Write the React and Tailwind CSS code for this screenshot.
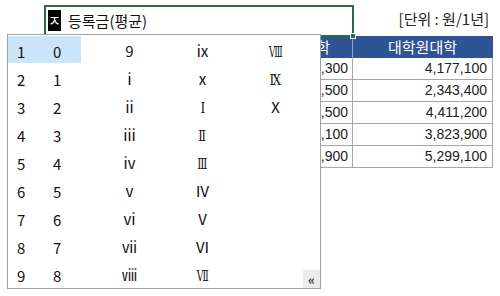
const FONT = { fontFamily: '"Noto Sans CJK KR", "Noto Sans", sans-serif' };
const NUM = { fontFamily: '"Liberation Sans", Arial, sans-serif' };
const BAR = { fontFamily: '"DejaVu Serif", "Noto Sans CJK KR", serif' };

const cols = [
  ["9", "ⅰ", "ⅱ", "ⅲ", "ⅳ", "ⅴ", "ⅵ", "ⅶ", "ⅷ"],
  ["ⅸ", "ⅹ", "Ⅰ", "Ⅱ", "Ⅲ", "Ⅳ", "Ⅴ", "Ⅵ", "Ⅶ"],
  ["Ⅷ", "Ⅸ", "Ⅹ", "", "", "", "", "", ""],
];

// glyphs drawn with top/bottom bars in the reference
const barred = { "Ⅰ": "scale-x-[0.8]", "Ⅱ": "scale-x-[0.75]", "Ⅲ": "scale-x-[0.7]", "Ⅶ": "scale-x-[0.62]", "Ⅷ": "scale-x-[0.58]", "Ⅸ": "scale-x-[0.8]" };

const rows = [
  ["1,802,300", "4,177,100"],
  ["1,554,500", "2,343,400"],
  ["2,071,500", "4,411,200"],
  ["1,938,100", "3,823,900"],
  ["2,496,900", "5,299,100"],
];

function Cell({ v }) {
  if (barred[v]) {
    return (
      <span className={`inline-block ${barred[v]}`} style={BAR}>
        {v}
      </span>
    );
  }
  return <span>{v}</span>;
}

function HanjaPopup() {
  return (
    <div className="absolute left-[7px] top-[34px] w-[314px] h-[255px] border border-[#a0a0a0] bg-white z-20 text-[15px] text-[#111]">
      <div className="flex flex-col">
        {Array.from({ length: 9 }).map((_, i) => (
          <div key={i} className="flex h-[28px] items-center">
            <div className={`flex w-[73px] h-[27px] items-center pt-[6px] ${i === 0 ? "bg-[#cce4f7]" : ""}`}>
              <span className="w-[45px] pl-[9px]">{i + 1}</span>
              <span>{i}</span>
            </div>
            <div className="w-[12px]" />
            {cols.map((c, j) => (
              <div key={j} className="w-[73px] pt-[5px] text-center">
                <Cell v={c[i]} />
              </div>
            ))}
          </div>
        ))}
      </div>
      <div className="absolute right-0 bottom-0 w-[17px] h-[18px] bg-[#ececec] flex items-center justify-center text-[13px] font-bold leading-none text-[#333]">
        «
      </div>
    </div>
  );
}

export default function App() {
  return (
    <div className="relative w-[500px] h-[296px] bg-white overflow-hidden" style={FONT}>
      <div className="flex h-[36px] pl-[44px] pr-[11px]">
        <div className="relative z-10 mt-[5px] w-[310px] h-[32px] border-2 border-[#2b6b45] flex items-start">
          <span className="mt-[3px] ml-[2px] w-[13px] h-[21px] bg-black text-white text-[14px] leading-[21px] text-center">ㅈ</span>
          <span className="mt-[3px] ml-[7px] text-[15px] leading-[21px] text-[#111]">등록금(평균)</span>
          <span className="absolute -right-[4px] -bottom-[4px] w-[6px] h-[6px] bg-[#2b6b45] border border-white" />
        </div>
        <div className="ml-auto mt-[8px] text-[15px] leading-[22px] text-[#222]">[단위 : 원/1년]</div>
      </div>
      <div className="ml-[253px] w-[240px] text-[14px] text-[#222]">
        <div className="grid grid-cols-[100px_139px] h-[22px] bg-[#2f5496] text-white text-[15px]">
          <div className="text-center leading-[21px] border-r border-[#8ea4cf]">일반대학</div>
          <div className="text-center leading-[21px]">대학원대학</div>
        </div>
        {rows.map((r, i) => (
          <div key={i} className="grid grid-cols-[100px_140px] h-[22px] border-b border-[#a6a6a6]" style={NUM}>
            <div className="text-right pr-[4px] leading-[21px] border-l border-r border-[#a6a6a6]">{r[0]}</div>
            <div className="text-right pr-[5px] leading-[21px] border-r border-[#a6a6a6]">{r[1]}</div>
          </div>
        ))}
      </div>
      <HanjaPopup />
    </div>
  );
}
